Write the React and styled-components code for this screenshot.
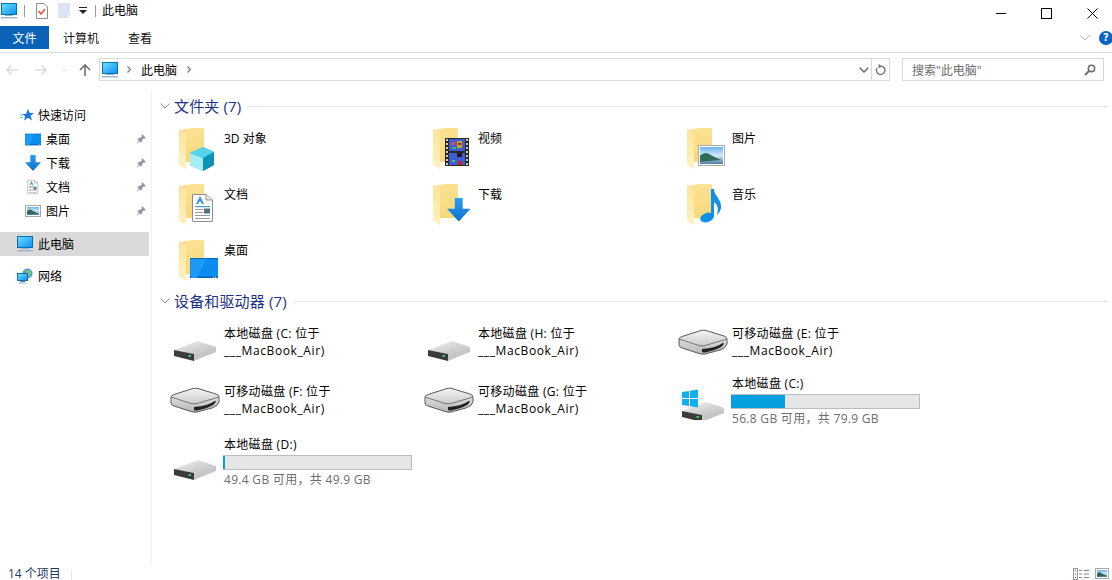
import React from "react";
import styled, { createGlobalStyle } from "styled-components";

const GlobalStyle = createGlobalStyle`
  html, body { margin: 0; padding: 0; background: #fff; }
  body { font-family: "Open Sans", "Noto Sans CJK SC", sans-serif; font-size: 12px; color: #000; }
`;

const Window = styled.div`
  width: 1112px;
  height: 580px;
  overflow: hidden;
  display: flex;
  flex-direction: column;
  background: #fff;
`;

const HiddenDefs = styled.svg`
  position: absolute;
  width: 0;
  height: 0;
`;

/* title bar */
const TitleBar = styled.div`
  height: 26px;
  flex: none;
  display: flex;
  align-items: center;
  padding: 0 0 5px 1px;
  box-sizing: border-box;
`;

const TitleSep = styled.span`
  width: 1px;
  height: 12px;
  background: #9a9a9a;
  margin: ${({ $m }) => $m};
`;

const TitleText = styled.span`
  font-size: 12px;
  line-height: 20px;
  flex: 1;
`;

const WinControls = styled.div`
  display: flex;
  align-items: center;
  margin-top: 5px;
  padding-right: 14px;
  gap: 35px;
`;

const Icon = styled.svg`
  display: block;
  flex: none;
  margin: ${({ $m }) => $m || 0};
`;

/* ribbon */
const RibbonTabs = styled.div`
  height: 27px;
  flex: none;
  display: flex;
  box-sizing: border-box;
  border-bottom: 1px solid #dadbdc;
  padding-bottom: 3px;
  align-items: stretch;
`;

const Tab = styled.div`
  width: ${({ $w }) => $w}px;
  display: flex;
  align-items: center;
  justify-content: center;
  font-size: 12px;
  background: ${({ $active }) => ($active ? "#0a63b8" : "transparent")};
  color: ${({ $active }) => ($active ? "#fff" : "#111")};
`;

const RibbonEnd = styled.div`
  margin-left: auto;
  display: flex;
  align-items: center;
  gap: 9px;
  margin-right: -1px;
`;

const HelpIcon = styled.div`
  width: 14px;
  height: 14px;
  border-radius: 50%;
  background: #0a63c9;
  color: #fff;
  font-family: "DejaVu Sans", sans-serif;
  font-weight: 700;
  font-size: 10px;
  line-height: 14px;
  text-align: center;
`;

/* address row */
const AddressRow = styled.div`
  height: 37px;
  flex: none;
  display: flex;
  align-items: flex-start;
  padding-top: 5px;
  box-sizing: border-box;
`;

const NavArrows = styled.div`
  width: 99px;
  height: 23px;
  flex: none;
  display: flex;
  align-items: center;
  padding-left: 6px;
  box-sizing: border-box;
`;

const AddressBox = styled.div`
  width: 791px;
  height: 23px;
  flex: none;
  box-sizing: border-box;
  border: 1px solid #d9d9d9;
  display: flex;
  align-items: center;
  padding-left: 2px;
`;

const Crumb = styled.span`
  font-size: 12px;
  margin: 0 10px 0 10px;
`;

const AddressEnd = styled.div`
  margin-left: auto;
  height: 100%;
  display: flex;
  align-items: center;
`;

const RefreshCell = styled.div`
  width: 17px;
  height: 100%;
  border-left: 1px solid #d9d9d9;
  margin-left: 2px;
  display: flex;
  align-items: center;
  justify-content: center;
`;

const SearchBox = styled.div`
  width: 202px;
  height: 23px;
  margin-left: 12px;
  flex: none;
  box-sizing: border-box;
  border: 1px solid #d9d9d9;
  display: flex;
  align-items: center;
  justify-content: space-between;
  padding: 0 7px 0 9px;
  color: #6d6d6d;
  font-size: 12px;
`;

/* body */
const Body = styled.div`
  flex: 1;
  min-height: 0;
  display: flex;
`;

const Sidebar = styled.nav`
  width: 152px;
  flex: none;
  box-sizing: border-box;
  border-right: 1px solid #f0f0f0;
  padding-top: 13px;
`;

const NavItem = styled.div`
  height: 24px;
  margin: ${({ $mt }) => $mt || 0}px 2px 0 0;
  display: flex;
  align-items: center;
  padding-left: ${({ $indent }) => ($indent ? 25 : 17)}px;
  background: ${({ $selected }) => ($selected ? "#d9d9d9" : "transparent")};
  font-size: 12px;
`;

const NavIconBox = styled.span`
  width: 21px;
  flex: none;
  display: flex;
  align-items: center;
`;

const NavLabel = styled.span`
  flex: 1;
`;

const Pin = styled.svg`
  margin-right: 3px;
  flex: none;
`;

const Content = styled.main`
  flex: 1;
  min-width: 0;
  padding: 7px 4px 0 8px;
`;

const GroupHeader = styled.div`
  height: 18px;
  display: flex;
  align-items: center;
  color: #1e3287;
  font-size: 15px;
  letter-spacing: 0.15px;
  white-space: nowrap;
`;

const GroupName = styled.span`
  padding-bottom: 2px;
`;

const GroupLine = styled.span`
  flex: 1;
  height: 1px;
  background: #e3e3e3;
  margin-left: 7px;
`;

const ItemGrid = styled.div`
  display: grid;
  grid-template-columns: repeat(3, 254px);
  grid-template-rows: ${({ $rows }) => $rows};
  margin: ${({ $mt }) => $mt}px 0 0 10px;
`;

const FolderItem = styled.div`
  display: flex;
  align-items: flex-start;
`;

const FolderLabel = styled.div`
  line-height: 17px;
  padding-top: 6px;
`;

const DriveItem = styled.div`
  display: flex;
  align-items: center;
`;

const DriveText = styled.div`
  line-height: 17px;
  letter-spacing: 0.3px;
  white-space: nowrap;
  padding-top: ${({ $hasBar }) => ($hasBar ? 2 : 0)}px;
`;

const DriveLine = styled.div`
  letter-spacing: ${({ $wide }) => ($wide ? 0.6 : 0.3)}px;
`;

const Track = styled.div`
  width: 189px;
  height: 15px;
  box-sizing: border-box;
  background: #e6e6e6;
  border: 1px solid #bcbcbc;
  border-left: 0;
  margin: 2px 0 1px -1px;
`;

const Fill = styled.div`
  height: 100%;
  background: #06a0e0;
`;

const FreeSpace = styled.div`
  color: #6d6d6d;
  line-height: 17px;
`;

const StatusBar = styled.footer`
  height: 15px;
  flex: none;
  box-sizing: border-box;
  display: flex;
  align-items: flex-start;
  padding: 2px 0 0 8px;
  font-size: 12px;
  line-height: 13px;
  color: #1d3a5f;
`;

const StatusSep = styled.span`
  width: 1px;
  height: 10px;
  margin: 3px 0 0 10px;
  background: #e6e6e6;
`;

const StatusViews = styled.div`
  margin-left: auto;
  display: flex;
  gap: 6px;
  padding: 1px 3px 0 0;
`;

/* drawings */
const Defs = () => (
  <HiddenDefs aria-hidden="true">
    <defs>
      <linearGradient id="screen" x1="0" y1="0" x2="1" y2="1">
        <stop offset="0" stopColor="#6fe0ff" />
        <stop offset="1" stopColor="#0a8ff0" />
      </linearGradient>
      <linearGradient id="folderBack" x1="0" y1="0" x2="0" y2="1">
        <stop offset="0" stopColor="#fbe295" />
        <stop offset="1" stopColor="#f6d675" />
      </linearGradient>
      <linearGradient id="folderFlap" x1="0" y1="0" x2="0" y2="1">
        <stop offset="0" stopColor="#fce59a" />
        <stop offset="1" stopColor="#fff2c0" />
      </linearGradient>
      <linearGradient id="driveTop" x1="0" y1="0" x2="1" y2="1">
        <stop offset="0" stopColor="#f3f3f3" />
        <stop offset="1" stopColor="#b9b9b9" />
      </linearGradient>
      <linearGradient id="removable" x1="0" y1="0" x2="0" y2="1">
        <stop offset="0" stopColor="#f5f5f5" />
        <stop offset="1" stopColor="#b5b5b5" />
      </linearGradient>
      <linearGradient id="arrow" x1="0" y1="0" x2="0" y2="1">
        <stop offset="0" stopColor="#2d9df0" />
        <stop offset="1" stopColor="#0b70d0" />
      </linearGradient>
      <linearGradient id="sky" x1="0" y1="0" x2="0" y2="1">
        <stop offset="0" stopColor="#6ab4ee" />
        <stop offset="0.5" stopColor="#d2e9f7" />
        <stop offset="1" stopColor="#4d7fa0" />
      </linearGradient>
    </defs>
  </HiddenDefs>
);

const MonitorIcon = ({ m }) => (
  <Icon $m={m} width="16" height="16" viewBox="0 0 16 16">
    <rect x="0.5" y="0.5" width="15" height="11" fill="url(#screen)" stroke="#0b6fae" strokeWidth="1" />
    <rect x="4" y="12" width="8" height="1" fill="#8fb0c8" />
    <rect x="0" y="14" width="16" height="1.4" fill="#9db4c8" />
  </Icon>
);

const PictureGlyph = ({ x, y, w, h }) => (
  <g>
    <rect x={x + 0.5} y={y + 0.5} width={w - 1} height={h - 1} fill="#fff" stroke="#a9a9a9" />
    <rect x={x + 2} y={y + 2} width={w - 4} height={h - 4} fill="url(#sky)" />
    <path
      d={`M${x + 2} ${y + h * 0.5} Q${x + w * 0.3} ${y + h * 0.25} ${x + w * 0.5} ${y + h * 0.5} L${x + w * 0.85} ${y + h * 0.72} L${x + 2} ${y + h * 0.8}Z`}
      fill="#2d6a58"
    />
  </g>
);

const DocGlyph = ({ x, y, s }) => (
  <g transform={`translate(${x} ${y}) scale(${s})`}>
    <path d="M0.5 0.5H14L20.5 6V27.5H0.5Z" fill="#fff" stroke="#8e8e8e" />
    <path d="M14 .5V6H20.5" fill="#e8e8e8" stroke="#8e8e8e" />
    <path d="M8 2L4 10H6L8 7L10 10H12Z" fill="#3a93d8" />
    <rect x="3" y="12" width="15" height="1.2" fill="#46a0e0" />
    <rect x="3" y="15" width="8" height="1" fill="#9a9a9a" />
    <rect x="3" y="18" width="8" height="1" fill="#9a9a9a" />
    <rect x="3" y="21" width="15" height="1" fill="#9a9a9a" />
    <rect x="3" y="24" width="15" height="1" fill="#9a9a9a" />
    <rect x="12" y="14.5" width="6" height="5" fill="#55707f" />
  </g>
);

const ArrowGlyph = ({ x, y, s }) => (
  <path
    transform={`translate(${x} ${y}) scale(${s})`}
    d="M8 0H16V11H24L12 24L0 11H8Z"
    fill="url(#arrow)"
  />
);

const DesktopGlyph = ({ x, y, w, h }) => (
  <g>
    <rect x={x} y={y} width={w} height={h} fill="#0a8cf0" />
    <rect x={x} y={y + h - 1.5} width={w} height="1.5" fill="#0560b0" />
    <rect x={x} y={y} width={w} height="1" fill="#0668b8" />
    <path d={`M${x + w * 0.25} ${y + h} L${x + w * 0.6} ${y + 1}H${x + 1}V${y + h}Z`} fill="#1c9af5" />
    <rect x={x + w - 5} y={y + h - 1.2} width="1" height="1" fill="#fff" />
    <rect x={x + w - 3} y={y + h - 1.2} width="1" height="1" fill="#fff" />
  </g>
);

const overlays = {
  cube: (
    <g>
      <path d="M18 29L31 23L42 28V41L31 47L18 41Z" fill="#17b4d4" />
      <path d="M18 29L31 34V47L18 41Z" fill="#a8ecf4" />
      <path d="M18 29L31 23L42 28L31 34Z" fill="#55d4ec" />
      <path d="M31 34L42 28V41L31 47Z" fill="#0b93b8" />
    </g>
  ),
  film: (
    <g>
      <rect x="19" y="14" width="24" height="28" fill="#2a2a22" />
      {[15, 19, 23, 27, 31, 35, 39].map((y) => (
        <g key={y}>
          <rect x="20" y={y} width="2" height="2" fill="#cfcfb8" />
          <rect x="40" y={y} width="2" height="2" fill="#cfcfb8" />
        </g>
      ))}
      <rect x="23" y="15" width="16" height="12" fill="#3e5cd8" />
      <rect x="23" y="29" width="16" height="12" fill="#3e5cd8" />
      <rect x="25" y="18" width="4" height="3" fill="#d84a6a" />
      <rect x="31" y="17" width="5" height="7" fill="#c9a21c" />
      <rect x="32" y="19" width="3" height="2" fill="#b81818" />
      <rect x="26" y="23" width="4" height="2" fill="#4fb060" />
      <rect x="31" y="29" width="5" height="4" fill="#1a1a10" />
      <rect x="32" y="37" width="4" height="4" fill="#c92020" />
      <rect x="26" y="36" width="3" height="2" fill="#58c070" />
    </g>
  ),
  picture: <PictureGlyph x={18} y={21} w={27} h={21} />,
  doc: <DocGlyph x={20} y={14} s={1} />,
  arrow: <ArrowGlyph x={21} y={18} s={0.98} />,
  music: (
    <g fill="#0f8fe8">
      <ellipse cx="27" cy="37.5" rx="7" ry="4.6" transform="rotate(-18 27 37.5)" />
      <path d="M31 9H34C34 16 42 19 41 28C40.5 31 39 33 37 35C38 31 38.5 27 36 24C35 23 34.5 22.5 34 22V37H31Z" />
    </g>
  ),
  desktop: <DesktopGlyph x={18} y={22} w={28} h={20} />,
};

const FolderIcon = ({ overlay }) => (
  <Icon width="54" height="56" viewBox="-2 0 54 56">
    <path d="M7 6L20 4H32V38H14V45L7 40Z" fill="url(#folderBack)" />
    <path d="M7 5L14 9V45L7 40Z" fill="url(#folderFlap)" />
    {overlays[overlay]}
  </Icon>
);

const DriveIcon = ({ type }) => (
  <Icon width="54" height="40" viewBox="-2 -3 54 40">
    {type === "removable" ? (
      <g>
        <path
          d="M-1 14Q-1 12.5 2 11.5L21 5.5Q23.5 4.8 26 5.5L44 11Q47 12 47 14V19Q46 23 40 25L25 29Q22 29.5 19 28.5L2 23Q-1 22 -1 20Z"
          fill="url(#removable)"
          stroke="#5a5a5a"
        />
        <path d="M-1 14L19 20.5Q22 21.3 25 20.5L47 14" fill="none" stroke="#777" />
        <path d="M22 24Q36 23 43.5 17.5V19.5Q41 24 25 27.5Q23 27.5 22 27Z" fill="#222" />
      </g>
    ) : (
      <g transform={type === "system" ? "translate(0 1)" : "translate(0 -2)"}>
        <path d="M2 27L26 18L44 24L22 31Z" fill="url(#driveTop)" />
        <path d="M2 27L22 31V38L2 33Z" fill="#3b3b3b" />
        <path d="M22 31L44 24V29L22 38Z" fill="#c6c6c6" />
        <rect x="16.5" y="32" width="2.5" height="2" fill="#35d05a" />
      </g>
    )}
    {type === "system" && (
      <g fill="#12b0ee">
        <path d="M2 9L9 8V15H2Z" />
        <path d="M10 7.8L18 6.5V15H10Z" />
        <path d="M2 16H9V23L2 22Z" />
        <path d="M10 16H18V24.5L10 23.2Z" />
      </g>
    )}
  </Icon>
);

const Chevron = ({ m }) => (
  <Icon $m={m} width="4" height="7" viewBox="0 0 4 7">
    <path d="M.5.5L3.5 3.5L.5 6.5" fill="none" stroke="#777" strokeWidth="1.2" />
  </Icon>
);

const PinIcon = () => (
  <Pin width="10" height="10" viewBox="0 0 10 10">
    <path d="M6 0L10 4L8.8 4.6L7.5 4.4L5.8 6.3L5.8 8L4.8 8.6L1.5 5.2L2 4.2H3.8L5.7 2.4L5.4 1.2Z" fill="#8a99a5" />
    <path d="M2.8 6.4L.2 9.8L3.6 7.2Z" fill="#8a99a5" />
  </Pin>
);

const folders = [
  { name: "3D 对象", overlay: "cube" },
  { name: "视频", overlay: "film" },
  { name: "图片", overlay: "picture" },
  { name: "文档", overlay: "doc" },
  { name: "下载", overlay: "arrow" },
  { name: "音乐", overlay: "music" },
  { name: "桌面", overlay: "desktop" },
];

const drives = [
  { label: "本地磁盘 (C: 位于", sub: "___MacBook_Air)", type: "hdd" },
  { label: "本地磁盘 (H: 位于", sub: "___MacBook_Air)", type: "hdd" },
  { label: "可移动磁盘 (E: 位于", sub: "___MacBook_Air)", type: "removable" },
  { label: "可移动磁盘 (F: 位于", sub: "___MacBook_Air)", type: "removable" },
  { label: "可移动磁盘 (G: 位于", sub: "___MacBook_Air)", type: "removable" },
  { label: "本地磁盘 (C:)", type: "system", free: 56.8, total: 79.9 },
  { label: "本地磁盘 (D:)", type: "hdd", free: 49.4, total: 49.9 },
];

const GroupTitle = ({ children }) => (
  <GroupHeader>
    <Icon $m="0 4px 0 0" width="10" height="6" viewBox="0 0 10 6">
      <path d="M.5.5L5 5L9.5.5" fill="none" stroke="#8a8a8a" />
    </Icon>
    <GroupName>{children}</GroupName>
    <GroupLine />
  </GroupHeader>
);

const App = () => {
  return (
    <Window>
      <GlobalStyle />
      <Defs />
      <TitleBar>
        <MonitorIcon />
        <TitleSep $m="0 0 0 7px" />
        <Icon $m="0 0 0 11px" width="12" height="16" viewBox="0 0 12 16">
          <path d="M.5.5H8L11.5 4V15.5H.5Z" fill="#fff" stroke="#8e8e8e" />
          <path d="M2.5 8L5 11L9 6" fill="none" stroke="#e2582a" strokeWidth="1.5" />
        </Icon>
        <Icon $m="0 0 0 10px" width="13" height="16" viewBox="0 0 13 16">
          <path d="M0 0H12V11L9 15H0Z" fill="#dbe4f3" />
          <path d="M9 15V11H12Z" fill="#fff" stroke="#c6d2e6" strokeWidth=".5" />
        </Icon>
        <Icon $m="0 0 0 8px" width="8" height="7" viewBox="0 0 8 7">
          <rect x="0" y="0" width="8" height="1" fill="#222" />
          <path d="M0 3H8L4 7Z" fill="#222" />
        </Icon>
        <TitleSep $m="0 6px 0 8px" />
        <TitleText>此电脑</TitleText>
        <WinControls>
          <Icon width="10" height="10" viewBox="0 0 10 10">
            <rect x="0" y="5" width="10" height="1" fill="#000" />
          </Icon>
          <Icon width="11" height="11" viewBox="0 0 11 11">
            <rect x=".5" y=".5" width="10" height="10" fill="none" stroke="#000" />
          </Icon>
          <Icon width="11" height="11" viewBox="0 0 11 11">
            <path d="M.5.5L10.5 10.5M10.5.5L.5 10.5" stroke="#000" />
          </Icon>
        </WinControls>
      </TitleBar>

      <RibbonTabs>
        <Tab $active $w={49}>文件</Tab>
        <Tab $w={64}>计算机</Tab>
        <Tab $w={54}>查看</Tab>
        <RibbonEnd>
          <Icon width="10" height="6" viewBox="0 0 10 6">
            <path d="M.5.5L5 5L9.5.5" fill="none" stroke="#b4b4b4" />
          </Icon>
          <HelpIcon>?</HelpIcon>
        </RibbonEnd>
      </RibbonTabs>

      <AddressRow>
        <NavArrows>
          <Icon width="12" height="10" viewBox="0 0 12 10">
            <path d="M5.5.5L1 5L5.5 9.5M1 5H12" fill="none" stroke="#dcdcdc" strokeWidth="1.6" />
          </Icon>
          <Icon $m="0 0 0 17px" width="12" height="10" viewBox="0 0 12 10">
            <path d="M6.5.5L11 5L6.5 9.5M11 5H0" fill="none" stroke="#dcdcdc" strokeWidth="1.6" />
          </Icon>
          <Icon $m="0 0 0 15px" width="5" height="4" viewBox="0 0 5 4">
            <path d="M.3.5L2.5 3L4.7.5" fill="none" stroke="#dcdcdc" />
          </Icon>
          <Icon $m="0 0 0 12px" width="12" height="12" viewBox="0 0 12 12">
            <path d="M1 6L6 1L11 6M6 1V12" fill="none" stroke="#6e6e6e" strokeWidth="1.6" />
          </Icon>
        </NavArrows>
        <AddressBox>
          <MonitorIcon />
          <Chevron m="0 0 0 9px" />
          <Crumb>此电脑</Crumb>
          <Chevron />
          <AddressEnd>
            <Icon width="10" height="6" viewBox="0 0 10 6">
              <path d="M.7.7L5 5L9.3.7" fill="none" stroke="#666" strokeWidth="1.4" />
            </Icon>
            <RefreshCell>
              <Icon width="11" height="12" viewBox="0 0 11 12">
                <path d="M6.5 2.2A4.2 4.2 0 1 1 2 4.2" fill="none" stroke="#7a7a7a" strokeWidth="1.5" />
                <path d="M3.5 0L7.5 2.3L3.5 4.4Z" fill="#7a7a7a" />
              </Icon>
            </RefreshCell>
          </AddressEnd>
        </AddressBox>
        <SearchBox>
          <span>搜索"此电脑"</span>
          <Icon width="12" height="12" viewBox="0 0 12 12">
            <circle cx="7.5" cy="4.5" r="3.2" fill="none" stroke="#6e6e6e" strokeWidth="1.5" />
            <path d="M5 7L1 11" stroke="#6e6e6e" strokeWidth="2" />
          </Icon>
        </SearchBox>
      </AddressRow>

      <Body>
        <Sidebar>
          <NavItem>
            <NavIconBox>
              <Icon $m="0 0 0 3px" width="14" height="12" viewBox="0 0 14 12">
                <path d="M8 0L9.8 4H14L10.6 6.8L12 11.5L8 8.8L4 11.5L5.2 7.2L2 5H6Z" fill="#1a78d8" />
                <path d="M0 6H3M0 8.5H3" stroke="#7ab8ee" />
              </Icon>
            </NavIconBox>
            <NavLabel>快速访问</NavLabel>
          </NavItem>
          <NavItem $indent>
            <NavIconBox>
              <Icon width="16" height="13" viewBox="18 22 28 20">
                <DesktopGlyph x={18} y={22} w={28} h={20} />
              </Icon>
            </NavIconBox>
            <NavLabel>桌面</NavLabel>
            <PinIcon />
          </NavItem>
          <NavItem $indent>
            <NavIconBox>
              <Icon width="16" height="16" viewBox="0 0 24 24">
                <ArrowGlyph x={0} y={0} s={1} />
              </Icon>
            </NavIconBox>
            <NavLabel>下载</NavLabel>
            <PinIcon />
          </NavItem>
          <NavItem $indent>
            <NavIconBox>
              <Icon width="16" height="16" viewBox="-5 0 32 28">
                <DocGlyph x={0} y={0} s={1} />
              </Icon>
            </NavIconBox>
            <NavLabel>文档</NavLabel>
            <PinIcon />
          </NavItem>
          <NavItem $indent>
            <NavIconBox>
              <Icon width="16" height="12" viewBox="0 0 16 12">
                <PictureGlyph x={0} y={0} w={16} h={12} />
              </Icon>
            </NavIconBox>
            <NavLabel>图片</NavLabel>
            <PinIcon />
          </NavItem>
          <NavItem $mt={9} $selected>
            <NavIconBox>
              <MonitorIcon />
            </NavIconBox>
            <NavLabel>此电脑</NavLabel>
          </NavItem>
          <NavItem $mt={8}>
            <NavIconBox>
              <Icon width="16" height="16" viewBox="0 0 16 16">
                <circle cx="10.5" cy="5.5" r="5" fill="#4a94d8" />
                <path d="M7 2Q10 4 9 7L13 9Q15 6 14 3Q11 1 7 2Z" fill="#7dc07a" />
                <rect x=".5" y="5.5" width="10" height="7" fill="url(#screen)" stroke="#1a6aa8" />
                <rect x="3" y="13" width="5" height="1" fill="#5b8bb0" />
                <rect x="2" y="14.5" width="7" height="1" fill="#8aa7bd" />
              </Icon>
            </NavIconBox>
            <NavLabel>网络</NavLabel>
          </NavItem>
        </Sidebar>

        <Content>
          <GroupTitle>文件夹 (7)</GroupTitle>
          <ItemGrid $rows="repeat(3, 56px)" $mt={9}>
            {folders.map((f) => (
              <FolderItem key={f.name}>
                <FolderIcon overlay={f.overlay} />
                <FolderLabel>{f.name}</FolderLabel>
              </FolderItem>
            ))}
          </ItemGrid>
          <GroupTitle>设备和驱动器 (7)</GroupTitle>
          <ItemGrid $rows="58px 58px 64px" $mt={3}>
            {drives.map((d) => (
              <DriveItem key={d.label}>
                <DriveIcon type={d.type} />
                <DriveText $hasBar={Boolean(d.total)}>
                  <DriveLine>{d.label}</DriveLine>
                  {d.sub && <DriveLine $wide>{d.sub}</DriveLine>}
                  {d.total && (
                    <>
                      <Track>
                        <Fill style={{ width: `${((d.total - d.free) / d.total) * 100}%` }} />
                      </Track>
                      <FreeSpace>
                        {d.free} GB 可用，共 {d.total} GB
                      </FreeSpace>
                    </>
                  )}
                </DriveText>
              </DriveItem>
            ))}
          </ItemGrid>
        </Content>
      </Body>

      <StatusBar>
        <span>14 个项目</span>
        <StatusSep />
        <StatusViews>
          <Icon width="16" height="12" viewBox="0 0 16 12">
            <rect x=".5" y=".5" width="4" height="11" fill="#eef3f6" stroke="#9a9a9a" />
            <rect x="2" y="2" width="1" height="1" fill="#3a8a5a" />
            <rect x="2" y="5.5" width="1" height="1" fill="#4a7ad0" />
            <rect x="2" y="9" width="1" height="1" fill="#c82040" />
            <path d="M6 2.5H9M11 2.5H16M6 6H9M11 6H16M6 9.5H9M11 9.5H16" stroke="#8a8a8a" />
          </Icon>
          <Icon width="14" height="11" viewBox="0 0 14 11">
            <PictureGlyph x={0} y={0} w={14} h={11} />
          </Icon>
        </StatusViews>
      </StatusBar>
    </Window>
  );
};

export default App;
